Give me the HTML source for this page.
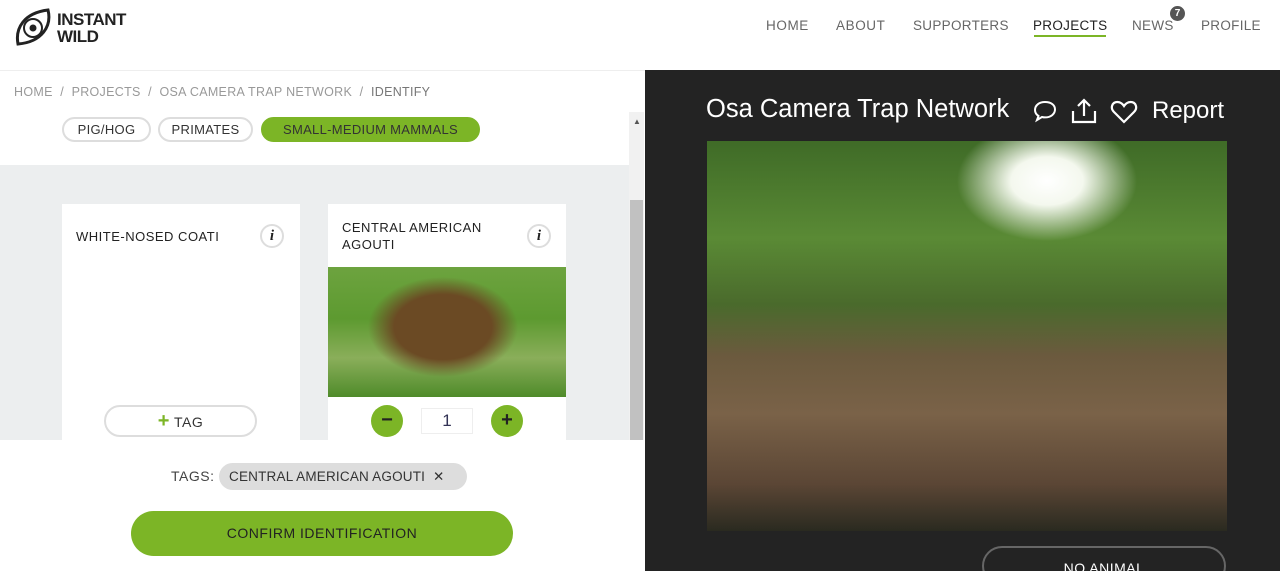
<!DOCTYPE html>
<html><head><style>
*{box-sizing:border-box;margin:0;padding:0}
html,body{width:1280px;height:571px;overflow:hidden}
body{background:#fff;font-family:"Liberation Sans",sans-serif;position:relative}
.a{position:absolute;white-space:nowrap}
.nav{font-size:13.5px;letter-spacing:.6px;color:#666;top:18px}
.chip{position:absolute;top:117px;height:25px;border:2px solid #ddd;border-radius:13px;font-size:13px;letter-spacing:.3px;color:#333;line-height:21px;text-align:center;white-space:nowrap}
.card{position:absolute;top:204px;width:238px;height:236px;background:#fff}
.ct{position:absolute;left:14px;font-size:13px;letter-spacing:.5px;color:#222;line-height:17px;white-space:nowrap}
.info{position:absolute;width:24px;height:24px;border:2px solid #ddd;border-radius:50%;font:italic bold 15px "Liberation Serif",serif;text-align:center;line-height:20px;color:#222}
.gb{position:absolute;width:32px;height:32px;border-radius:50%;background:#7cb526;color:#222;font-size:20px;font-weight:bold;text-align:center;line-height:30px}
</style></head><body>
<svg class="a" style="left:14px;top:8px" width="38" height="40" viewBox="0 0 38 40"><path d="M4 36 C1 20 10 5 34 2 C38 18 28 34 4 36Z" fill="none" stroke="#222" stroke-width="3"/><circle cx="19" cy="20" r="9" fill="none" stroke="#222" stroke-width="2"/><circle cx="19" cy="20" r="3.5" fill="#222"/></svg>
<div class="a" style="left:57px;top:11px;font-size:17px;font-weight:bold;line-height:17px;color:#222;letter-spacing:-.5px">INSTANT<br>WILD</div>
<div class="a nav" style="left:766px">HOME</div>
<div class="a nav" style="left:836px">ABOUT</div>
<div class="a nav" style="left:913px;letter-spacing:.3px">SUPPORTERS</div>
<div class="a nav" style="left:1033px;color:#222;letter-spacing:.3px">PROJECTS</div>
<div class="a" style="left:1034px;top:35px;width:72px;height:2px;background:#7cb526"></div>
<div class="a nav" style="left:1132px;letter-spacing:.3px">NEWS</div>
<div class="a" style="left:1170px;top:6px;width:15px;height:15px;border-radius:50%;background:#555;color:#fff;font-size:10px;font-weight:bold;text-align:center;line-height:15px">7</div>
<div class="a nav" style="left:1201px;letter-spacing:.3px">PROFILE</div>
<div class="a" style="left:0;top:70px;width:645px;height:1px;background:#eee"></div>
<div class="a" style="left:14px;top:85px;font-size:12.5px;letter-spacing:.3px;color:#999">HOME &nbsp;/ &nbsp;PROJECTS &nbsp;/ &nbsp;OSA CAMERA TRAP NETWORK &nbsp;/ &nbsp;<span style="color:#777">IDENTIFY</span></div>
<div class="chip" style="left:62px;width:89px">PIG/HOG</div>
<div class="chip" style="left:158px;width:95px">PRIMATES</div>
<div class="chip" style="left:261px;width:219px;background:#7cb526;border-color:#7cb526">SMALL-MEDIUM MAMMALS</div>
<div class="a" style="left:0;top:165px;width:629px;height:275px;background:#eceeef"></div>
<div class="a" style="left:629px;top:112px;width:15px;height:328px;background:#f1f1f1"></div>
<div class="a" style="left:630px;top:200px;width:13px;height:240px;background:#c1c1c1"></div>
<div class="a" style="left:633px;top:117px;font-size:8px;color:#555">▲</div>
<div class="card" style="left:62px"><div class="ct" style="top:24px">WHITE-NOSED COATI</div><div class="info" style="left:198px;top:20px">i</div>
<div class="a" style="left:42px;top:201px;width:153px;height:32px;border:2px solid #ddd;border-radius:16px;text-align:center;font-size:14px;letter-spacing:.5px;color:#333;line-height:28px"><b style="color:#7cb526;font-size:20px">+</b> TAG</div></div>
<div class="card" style="left:328px"><div class="ct" style="top:15px">CENTRAL AMERICAN<br>AGOUTI</div><div class="info" style="left:199px;top:20px">i</div>
<div class="a" style="left:0;top:63px;width:238px;height:130px;background:radial-gradient(ellipse 75px 50px at 115px 60px,#6b4a24 0,#6b4a24 65%,transparent 100%),linear-gradient(180deg,#6da33f,#5d9a30 40%,#8aae5a 70%,#4f8b2a)"></div>
<div class="gb" style="left:43px;top:201px">−</div>
<div class="a" style="left:93px;top:204px;width:52px;height:26px;border:1px solid #eee;text-align:center;font-size:17px;color:#335;line-height:24px">1</div>
<div class="gb" style="left:163px;top:201px">+</div></div>
<div class="a" style="left:171px;top:468px;font-size:14px;letter-spacing:.5px;color:#444">TAGS:</div>
<div class="a" style="left:219px;top:463px;width:248px;height:27px;background:#ddd;border-radius:14px;font-size:13.5px;letter-spacing:.2px;color:#333;line-height:27px;padding-left:10px">CENTRAL AMERICAN AGOUTI &nbsp;✕</div>
<div class="a" style="left:131px;top:511px;width:382px;height:45px;background:#7cb526;border-radius:23px;text-align:center;line-height:45px;font-size:14px;letter-spacing:.5px;color:#222">CONFIRM IDENTIFICATION</div>
<div class="a" style="left:645px;top:70px;width:635px;height:501px;background:#232323"></div>
<div class="a" style="left:706px;top:95px;font-size:25.5px;color:#fff">Osa Camera Trap Network</div>
<svg class="a" style="left:1032px;top:99px" width="26" height="24" viewBox="0 0 26 24"><path d="M13 3C7 3 3 6.5 3 11c0 2.5 1.3 4.5 3.5 6L5 21l5-3c1 .3 2 .4 3 .4 6 0 10-3.5 10-8S19 3 13 3z" fill="none" stroke="#fff" stroke-width="2"/></svg>
<svg class="a" style="left:1070px;top:97px" width="28" height="28" viewBox="0 0 28 28"><path d="M3 14v11h22V14M14 19V3M8 9l6-6 6 6" fill="none" stroke="#fff" stroke-width="2.2"/></svg>
<svg class="a" style="left:1110px;top:99px" width="28" height="26" viewBox="0 0 28 26"><path d="M14 23L4 13C0 9 2 3 7.5 3 10.5 3 13 5.5 14 7c1-1.5 3.5-4 6.5-4C26 3 28 9 24 13z" fill="none" stroke="#fff" stroke-width="2.2"/></svg>
<div class="a" style="left:1152px;top:97px;font-size:24px;color:#fff">Report</div>
<div class="a" style="left:707px;top:141px;width:520px;height:390px;background:radial-gradient(ellipse 90px 60px at 340px 40px,#fff 0,#f4f8ee 40%,transparent 100%),linear-gradient(180deg,#3f6b27 0,#5a8a35 25%,#4a6a2c 42%,#6b5a3e 55%,#7a6248 70%,#5b4635 88%,#2a2a20 100%)"></div>
<div class="a" style="left:982px;top:546px;width:244px;height:40px;border:2px solid #666;border-radius:20px;text-align:center;color:#fff;font-size:14px;letter-spacing:.5px;line-height:40px">NO ANIMAL</div>
</body></html>
